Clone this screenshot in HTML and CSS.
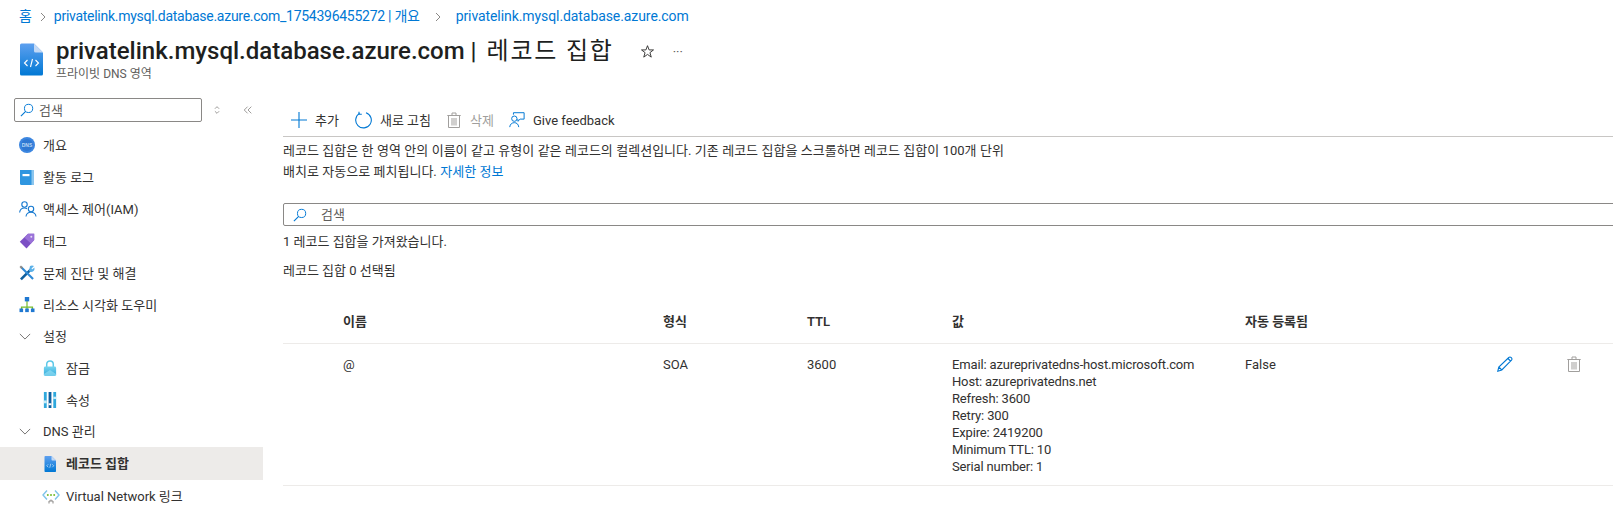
FILE: index.html
```html
<!DOCTYPE html>
<html lang="ko">
<head>
  <meta charset="UTF-8">
  <title>privatelink.mysql.database.azure.com | 레코드 집합</title>
  <link rel="stylesheet" href="styles.css">
</head>
<body>
  <svg class="defs" width="0" height="0">
    <defs>
      <linearGradient id="blueFile" x1="0" y1="0" x2="0" y2="1">
        <stop offset="0" stop-color="#5ea0ef"/>
        <stop offset="1" stop-color="#0078d4"/>
      </linearGradient>
      <linearGradient id="lockGrad" x1="0" y1="0" x2="0" y2="1">
        <stop offset="0" stop-color="#76d4ee"/>
        <stop offset="1" stop-color="#2fa8dc"/>
      </linearGradient>
      <symbol id="dnsFile" viewBox="0 0 24 32">
        <path d="M1 1.500Q1 0 2.500 0H15L24 9V30.500Q24 32 22.500 32H2.500Q1 32 1 30.500Z" fill="url(#blueFile)"/>
        <path d="M15 0L24 9H16.500Q15 9 15 7.500Z" fill="#c3d9f5"/>
        <path d="M8.500 16.500L5.500 19.500L8.500 22.500M16.500 16.500L19.500 19.500L16.500 22.500M13.500 15.500L11.500 23.500" fill="none" stroke="#fff" stroke-width="1.100"/>
      </symbol>
      <symbol id="trash" viewBox="0 0 16 16">
        <path d="M2.500 3.500V15.500H13.500V3.500M1.300 3.500H14.700M6 3.500V1H10V3.500" fill="none" stroke="currentColor"/>
        <path d="M6 6V13.500M8 6V13.500M10 6V13.500" fill="none" stroke="currentColor"/>
      </symbol>
      <symbol id="glass" viewBox="0 0 16 16">
        <circle cx="9.800" cy="6.200" r="4.700" fill="none" stroke="#0078d4" stroke-width="1.100"/>
        <path d="M6.500 9.500L1 15" fill="none" stroke="#0078d4" stroke-width="1.300"/>
      </symbol>
    </defs>
  </svg>

  <nav class="breadcrumb">
    <a href="#">홈</a><svg class="crumb-sep" viewBox="0 0 6 10"><path d="M1 1L5 5L1 9" fill="none" stroke="#8a8886"/></svg>
    <a href="#" class="crumb-long">privatelink.mysql.database.azure.com_1754396455272 | 개요</a><svg class="crumb-sep after-long" viewBox="0 0 6 10"><path d="M1 1L5 5L1 9" fill="none" stroke="#8a8886"/></svg>
    <a href="#">privatelink.mysql.database.azure.com</a>
  </nav>

  <header class="page-head">
    <svg class="head-icon"><use href="#dnsFile"/></svg>
    <div class="head-text">
      <div class="head-row">
        <h1>privatelink.mysql.database.azure.com | <span class="title-ko">레코드 집합</span></h1>
        <svg class="star" viewBox="0 0 16 16"><path d="M8 1.800L9.700 6.300H14.400L10.600 9.200L12 14L8 11.100L4 14L5.400 9.200L1.600 6.300H6.300Z" fill="none" stroke="#323130"/></svg>
        <span class="more">···</span>
      </div>
      <p class="subtitle">프라이빗 DNS 영역</p>
    </div>
  </header>

  <div class="layout">
    <aside class="sidebar">
      <div class="side-tools">
        <div class="side-search">
          <svg class="glass"><use href="#glass"/></svg>
          <span>검색</span>
        </div>
        <svg class="mini updown" viewBox="0 0 10 12"><path d="M2.500 4.500L5 2L7.500 4.500M2.500 7.500L5 10L7.500 7.500" fill="none" stroke="#8a8886"/></svg>
        <svg class="mini collapse" viewBox="0 0 12 12"><path d="M5.500 2L1.500 6L5.500 10M10 2L6 6L10 10" fill="none" stroke="#8a8886"/></svg>
      </div>
      <ul class="menu">
        <li class="menu-item">
          <svg class="menu-icon" viewBox="0 0 16 16"><circle cx="8" cy="8" r="8" fill="#3c86e0"/><circle cx="8" cy="8" r="6" fill="#2f78d2"/><text x="8" y="9.800" class="dns-mark">DNS</text></svg>
          개요
        </li>
        <li class="menu-item">
          <svg class="menu-icon" viewBox="0 0 16 16"><path d="M1 1H15V16H2.500Q1 16 1 14.500Z" fill="#2f96e0"/><path d="M12.500 1H15V16H12.500Z" fill="#8cc6ee"/><rect x="3.500" y="5" width="7" height="2.200" fill="#fff"/></svg>
          활동 로그
        </li>
        <li class="menu-item">
          <svg class="menu-icon wide" viewBox="0 0 18 16"><g fill="none" stroke="#1679d0" stroke-width="1.100"><circle cx="5.500" cy="3.500" r="2.700"/><path d="M0.600 11.500C1 8.500 3 7 5.500 7Q7 7 8 7.800"/><circle cx="12" cy="8" r="2.700"/><path d="M7 15.500C7.300 12.800 9.500 11.300 12 11.300C14.500 11.300 16.700 12.800 17 15.500"/></g></svg>
          액세스 제어(IAM)
        </li>
        <li class="menu-item">
          <svg class="menu-icon" viewBox="0 0 16 16"><path d="M9 0.800H15.200V7L7.500 15.500L0.800 8.800Z" fill="#7c4fc4"/><path d="M9 0.800H15.200V7L12 10.500L5.500 4.700Z" fill="#9a72d8"/><circle cx="12.300" cy="3.700" r="1" fill="#e6dcf6"/></svg>
          태그
        </li>
        <li class="menu-item">
          <svg class="menu-icon" viewBox="0 0 16 16"><path d="M1 13.500L11 3.500L12.800 5.300L2.800 15.300Z" fill="#0f5f9e"/><path d="M11 1Q13 .2 15 1L12.500 3.500L13 4.500L15.500 2.500Q16 5 14 6.500Q12 7.500 10 6Z" fill="#5ab0e8"/><path d="M1.500 3L3 1.500L14.800 13.300L13.300 14.800Z" fill="#2f8ad6"/><path d="M.5 2L2 .5L4 2.500L2.500 4Z" fill="#8a8886"/></svg>
          문제 진단 및 해결
        </li>
        <li class="menu-item">
          <svg class="menu-icon" viewBox="0 0 16 16"><path d="M8 4V10M2.500 13V10.200H13.500V13M8 10V13" fill="none" stroke="#76bc2d" stroke-width="1.200"/><rect x="5.800" y="0" width="4.400" height="4.400" fill="#1f78d1"/><rect x="0.500" y="11.500" width="3.600" height="3.600" fill="#1f78d1"/><rect x="6.200" y="11.500" width="3.600" height="3.600" fill="#1f78d1"/><rect x="11.900" y="11.500" width="3.600" height="3.600" fill="#1f78d1"/></svg>
          리소스 시각화 도우미
        </li>
        <li class="menu-item group">
          <svg class="chevron" viewBox="0 0 14 8"><path d="M1 1L7 7L13 1" fill="none" stroke="#605e5c"/></svg>
          설정
        </li>
        <li class="menu-item sub">
          <svg class="menu-icon" viewBox="0 0 14 17"><path d="M3.500 8V4.500A3.500 3.500 0 0 1 10.500 4.500V8" fill="none" stroke="#5ec8e8" stroke-width="1.600"/><rect x="0.500" y="7" width="13" height="10" rx="1.500" fill="url(#lockGrad)"/><path d="M0.500 15L7 10.500L13.500 15V17H0.500Z" fill="#9be3f5" opacity=".6"/></svg>
          잠금
        </li>
        <li class="menu-item sub">
          <svg class="menu-icon" viewBox="0 0 14 17"><rect x="0.500" width="3" height="17" fill="#2fa8dc"/><rect x="5.500" width="3" height="17" fill="#0f5f9e"/><rect x="10.500" width="3" height="17" fill="#2fa8dc"/><rect x="0.500" y="9" width="3" height="3" fill="#c9ecf8"/><rect x="5.500" y="12" width="3" height="2" fill="#fff"/><rect x="10.500" y="5" width="3" height="2.500" fill="#c9ecf8"/></svg>
          속성
        </li>
        <li class="menu-item group">
          <svg class="chevron" viewBox="0 0 14 8"><path d="M1 1L7 7L13 1" fill="none" stroke="#605e5c"/></svg>
          DNS 관리
        </li>
        <li class="menu-item sub active">
          <svg class="menu-icon"><use href="#dnsFile"/></svg>
          레코드 집합
        </li>
        <li class="menu-item sub">
          <svg class="menu-icon vnet" viewBox="0 0 18 16"><path d="M5 2.500L1 7L5 11.500M13 2.500L17 7L13 11.500" fill="none" stroke="#7fc4ea" stroke-width="1.400"/><circle cx="5.800" cy="7" r="1" fill="#76bc2d"/><circle cx="9" cy="7" r="1" fill="#76bc2d"/><circle cx="12.200" cy="7" r="1" fill="#76bc2d"/><path d="M9 11.500V13M7 13H11M7 13V15.500M11 13V15.500" stroke="#8a8886" fill="none"/></svg>
          Virtual Network 링크
        </li>
      </ul>
    </aside>

    <main class="content">
      <div class="toolbar">
        <button class="tool">
          <svg class="tool-icon" viewBox="0 0 16 16"><path d="M8 0V16M0 8H16" fill="none" stroke="#0078d4" stroke-width="1.100"/></svg>
          추가
        </button>
        <button class="tool">
          <svg class="tool-icon refresh" viewBox="0 0 18 18"><path d="M5.500 2.400A7.800 7.800 0 1 0 12 1.700" fill="none" stroke="#0078d4" stroke-width="1.100"/><path d="M5 .8V3.200H7.800" fill="none" stroke="#0078d4" stroke-width="1.100"/></svg>
          새로 고침
        </button>
        <button class="tool disabled">
          <svg class="tool-icon" viewBox="0 0 16 16"><use href="#trash"/></svg>
          삭제
        </button>
        <button class="tool">
          <svg class="tool-icon" viewBox="0 0 18 18"><g fill="none" stroke="#0078d4" stroke-width="1.100"><circle cx="6" cy="7.500" r="3"/><path d="M.8 17C1.200 13.500 3.500 12 6 12C8.500 12 10.500 13.500 11 17"/><path d="M5 3V.8H17V8H12.500L10 10.500V8"/></g></svg>
          Give feedback
        </button>
      </div>

      <p class="intro">레코드 집합은 한 영역 안의 이름이 같고 유형이 같은 레코드의 컬렉션입니다. 기존 레코드 집합을 스크롤하면 레코드 집합이 100개 단위<br>배치로 자동으로 페치됩니다. <a href="#">자세한 정보</a></p>

      <div class="filter">
        <svg class="glass"><use href="#glass"/></svg>
        <span>검색</span>
      </div>
      <p class="status">1 레코드 집합을 가져왔습니다.</p>
      <p class="status selected">레코드 집합 0 선택됨</p>

      <div class="records head">
        <span>이름</span><span>형식</span><span>TTL</span><span>값</span><span>자동 등록됨</span>
      </div>
      <div class="records">
        <span>@</span>
        <span>SOA</span>
        <span>3600</span>
        <span class="soa-value">Email: azureprivatedns-host.microsoft.com<br>Host: azureprivatedns.net<br>Refresh: 3600<br>Retry: 300<br>Expire: 2419200<br>Minimum TTL: 10<br>Serial number: 1</span>
        <span>False</span>
        <span class="actions">
          <svg class="edit" viewBox="0 0 16 16"><path d="M.8 15.200L1.800 11L11.800 1.500Q13 .5 14.300 1.700Q15.500 3 14.500 4.200L4.800 14Z M11 2.500L13.500 5M1.800 11L4.800 14" fill="none" stroke="#0078d4" stroke-width="1.100"/></svg>
          <svg class="bin"><use href="#trash"/></svg>
        </span>
      </div>
    </main>
  </div>
</body>
</html>
```
FILE: styles.css
```css
html, body {
  margin: 0;
  padding: 0;
  height: 514px;
  overflow: hidden;
}

body {
  font-family: Roboto, "Noto Sans CJK KR", sans-serif;
  font-size: 13px;
  line-height: 17px;
  color: #323130;
  background-color: #fff;
}

.defs {
  display: block;
  height: 0;
}

a {
  color: #0078d4;
  text-decoration: none;
}

/* Breadcrumb */
.breadcrumb {
  display: flex;
  align-items: center;
  height: 17px;
  padding: 8px 0 0 19px;
  font-size: 14px;
  letter-spacing: -0.080px;
}

.crumb-long {
  letter-spacing: -0.270px;
}

.crumb-sep {
  width: 6px;
  height: 10px;
  margin: 0 8px;
}

.crumb-sep.after-long {
  margin-left: 15px;
  margin-right: 15px;
}

/* Header */
.page-head {
  display: flex;
  padding: 10px 0 0 19px;
  height: 52px;
}

.head-icon {
  width: 24px;
  height: 33px;
  margin: 8px 13px 0 0;
}

.head-row {
  display: flex;
  align-items: center;
  height: 32px;
}

h1 {
  margin: 0;
  font-size: 24px;
  line-height: 32px;
  font-weight: 500;
  color: #201f1e;
  white-space: nowrap;
}

.title-ko {
  margin-left: 4px;
  font-weight: 400;
  letter-spacing: 1.800px;
}

.star {
  width: 15px;
  height: 15px;
  margin-left: 26px;
}

.more {
  margin-left: 18px;
  font-size: 13px;
  color: #605e5c;
}

.subtitle {
  margin: 0;
  font-size: 12px;
  line-height: 14px;
  color: #605e5c;
}

/* Two columns */
.layout {
  display: flex;
  margin-top: 11px;
}

.sidebar {
  width: 263px;
  flex-shrink: 0;
}

.side-tools {
  display: flex;
  align-items: center;
  height: 24px;
  padding-left: 14px;
}

.side-search {
  display: flex;
  align-items: center;
  width: 186px;
  height: 22px;
  border: 1px solid #8a8886;
  border-radius: 2px;
}

.side-search span {
  color: #605e5c;
}

.glass {
  width: 14px;
  height: 14px;
  margin: 0 5px;
}

.mini {
  width: 10px;
  height: 10px;
}

.updown {
  margin-left: 10px;
}

.collapse {
  margin-left: 21px;
}

.menu {
  list-style: none;
  margin: 7px 0 0;
  padding: 0;
}

.menu-item {
  display: flex;
  align-items: center;
  height: 32px;
  padding-left: 19px;
  white-space: nowrap;
}

.menu-icon {
  width: 16px;
  height: 16px;
  margin-right: 8px;
  flex-shrink: 0;
}

.menu-icon.wide,
.menu-icon.vnet {
  width: 18px;
  margin-right: 6px;
}

.dns-mark {
  font-family: "Liberation Sans", sans-serif;
  font-size: 5px;
  font-weight: 700;
  fill: #bcd8f5;
  text-anchor: middle;
}

.group {
  height: 31px;
}

.group .chevron {
  width: 12px;
  height: 7px;
  margin-right: 12px;
}

.sub {
  padding-left: 42px;
}

.active {
  height: 33px;
  background-color: #edebe9;
  font-weight: 600;
}

/* Main area */
.content {
  flex: 1;
  min-width: 0;
  padding: 6px 0 0 20px;
}

.toolbar {
  display: flex;
  align-items: center;
  height: 32px;
  margin-right: -4px;
  padding-left: 8px;
  border-bottom: 1px solid #c8c6c4;
}

.tool {
  display: flex;
  align-items: center;
  border: none;
  padding: 0;
  margin-right: 15px;
  background: none;
  font: inherit;
  color: #323130;
}

.tool.disabled {
  color: #a19f9d;
}

.tool-icon {
  width: 16px;
  height: 16px;
  margin-right: 8px;
}

.refresh {
  width: 18px;
  height: 18px;
}

.intro {
  margin: 3px 0 0;
  line-height: 21px;
  white-space: nowrap;
  word-spacing: 0.200px;
}

.filter {
  display: flex;
  align-items: center;
  height: 21px;
  margin: 21px -4px 0 0;
  border: 1px solid #8a8886;
  border-radius: 2px;
  color: #605e5c;
}

.filter .glass {
  margin: 0 14px 0 9px;
}

.status {
  margin: 7px 0 0;
}

.status.selected {
  margin-top: 12px;
}

/* Record grid */
.records {
  display: grid;
  grid-template-columns: 380px 144px 145px 293px 252px 1fr;
  padding: 12px 0 10px;
  border-bottom: 1px solid #edebe9;
}

.records > span:first-child {
  padding-left: 60px;
}

.records.head {
  margin-top: 34px;
  padding: 0 0 13px;
  font-weight: 600;
}

.soa-value {
  letter-spacing: -0.150px;
}

.actions {
  display: flex;
  gap: 53px;
}

.edit {
  width: 16px;
  height: 16px;
}

.bin {
  width: 16px;
  height: 16px;
  color: #a19f9d;
}
```
